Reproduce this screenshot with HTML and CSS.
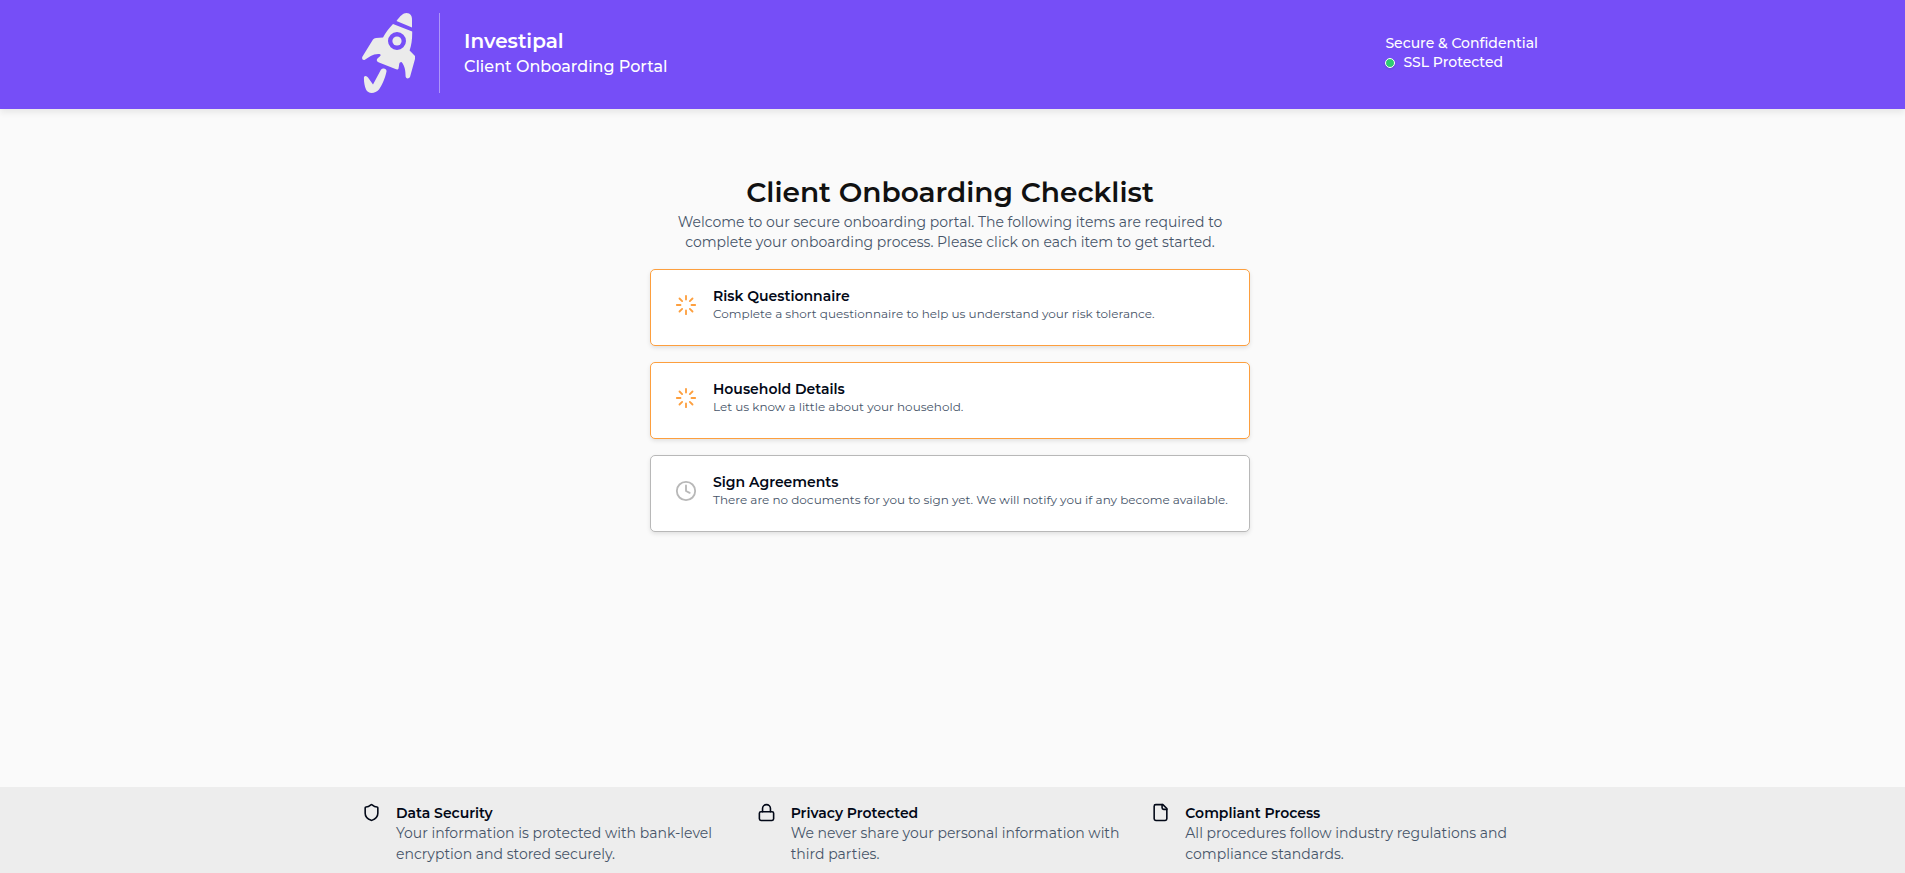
FILE: index.html
```html
<!DOCTYPE html>
<html lang="en">
<head>
<meta charset="utf-8">
<meta name="viewport" content="width=device-width, initial-scale=1">
<title>Client Onboarding Portal</title>
<link rel="stylesheet" href="styles.css">
</head>
<body>
<header class="header">
  <div class="container header-inner">
    <div class="brand">
      <svg class="logo" viewBox="0 0 54 80" aria-hidden="true">
        <path d="M34.500 8 C38 3 41 0 44.500 0 C48.500 0 50 3 50 6.500 L50 14.500 Z"/>
        <path fill-rule="evenodd" d="M31 11 L50.200 18.500 C50.300 26 49.500 32 47.600 37.500 L53 43 L53 46 L48 64 C47 66 44 66 43.600 63.500 C43.500 58 43 53 39.500 49 C36.500 49 37.500 52 36.500 55.500 C36 57 34.500 56.500 33.500 56 L17 49.500 C14.500 48.500 14 46.500 16 45 C19 43 19.500 41.500 17.500 41 C11 40.500 7 44 2.500 47 C0.500 47.500 -0.500 45.500 0.500 43.500 L11 26.500 Q12 25 14 25 L21 24.500 C23.500 20 27 15 31 11 Z M35 19 A9 9 0 1 0 35 37 A9 9 0 1 0 35 19 Z"/>
        <circle cx="35" cy="28" r="4.600"/>
        <path d="M2 64 C3 62 5 63 6 64.500 L11 71.500 L18.500 57.500 C20 54.500 25 55 24.500 58.500 C23 66 19.500 73 17 76.500 C13 81 6 81 4 76.500 C2.500 73 1.700 68 2 64 Z"/>
      </svg>
      <div class="brand-text">
        <div class="brand-name">Investipal</div>
        <div class="brand-sub">Client Onboarding Portal</div>
      </div>
    </div>
    <div class="secure">
      <div>Secure &amp; Confidential</div>
      <div class="ssl"><span class="dot"></span>SSL Protected</div>
    </div>
  </div>
</header>
<main class="main">
  <h1 class="title">Client Onboarding Checklist</h1>
  <p class="intro">Welcome to our secure onboarding portal. The following items are required to complete your onboarding process. Please click on each item to get started.</p>
  <div class="list">
    <button type="button" class="card">
      <svg class="card-icon" viewBox="0 0 24 24" aria-hidden="true"><path d="M12 2v4M12 18v4M2 12h4M18 12h4M4.900 4.900l2.900 2.900M16.200 16.200l2.900 2.900M4.900 19.100l2.900-2.900M16.200 7.800l2.900-2.900"/></svg>
      <span class="card-text"><span class="card-title">Risk Questionnaire</span><span class="card-desc">Complete a short questionnaire to help us understand your risk tolerance.</span></span>
    </button>
    <button type="button" class="card">
      <svg class="card-icon" viewBox="0 0 24 24" aria-hidden="true"><path d="M12 2v4M12 18v4M2 12h4M18 12h4M4.900 4.900l2.900 2.900M16.200 16.200l2.900 2.900M4.900 19.100l2.900-2.900M16.200 7.800l2.900-2.900"/></svg>
      <span class="card-text"><span class="card-title">Household Details</span><span class="card-desc">Let us know a little about your household.</span></span>
    </button>
    <button type="button" class="card card-waiting">
      <svg class="card-icon" viewBox="0 0 24 24" aria-hidden="true"><circle cx="12" cy="12" r="10"/><path d="M12 6v6l4 2"/></svg>
      <span class="card-text"><span class="card-title">Sign Agreements</span><span class="card-desc">There are no documents for you to sign yet. We will notify you if any become available.</span></span>
    </button>
  </div>
</main>
<footer class="footer">
  <div class="container features">
    <section class="feature">
      <svg class="feature-icon" viewBox="0 0 24 24" aria-hidden="true"><path d="M20 13c0 5-3.500 7.500-7.660 8.950a1 1 0 0 1-.67-.01C7.500 20.500 4 18 4 13V6a1 1 0 0 1 1-1c2 0 4.500-1.200 6.240-2.720a1.170 1.170 0 0 1 1.520 0C14.510 3.810 17 5 19 5a1 1 0 0 1 1 1z"/></svg>
      <div><h2 class="feature-title">Data Security</h2><p class="feature-desc">Your information is protected with bank-level encryption and stored securely.</p></div>
    </section>
    <section class="feature">
      <svg class="feature-icon" viewBox="0 0 24 24" aria-hidden="true"><rect x="3" y="11" width="18" height="11" rx="2"/><path d="M7 11V7a5 5 0 0 1 10 0v4"/></svg>
      <div><h2 class="feature-title">Privacy Protected</h2><p class="feature-desc">We never share your personal information with third parties.</p></div>
    </section>
    <section class="feature">
      <svg class="feature-icon" viewBox="0 0 24 24" aria-hidden="true"><path d="M15 2H6a2 2 0 0 0-2 2v16a2 2 0 0 0 2 2h12a2 2 0 0 0 2-2V7Z"/><path d="M14 2v4a2 2 0 0 0 2 2h4"/></svg>
      <div><h2 class="feature-title">Compliant Process</h2><p class="feature-desc">All procedures follow industry regulations and compliance standards.</p></div>
    </section>
  </div>
</footer>
</body>
</html>
```
FILE: styles.css
```css
* { box-sizing: border-box; }
body {
  margin: 0;
  padding-right: 5px;
  min-height: 100vh;
  display: flex;
  flex-direction: column;
  background: #fafafa;
  color: #020817;
  font-family: Montserrat, Inter, sans-serif;
  font-size: 14px;
}
h1, h2, p { margin: 0; }
.container { width: 100%; max-width: 1176px; margin: 0 auto; }
.header {
  margin-right: -5px;
  padding: 13px 5px 16px 0;
  background: #764ef7;
  color: #fff;
  box-shadow: 0 4px 6px rgba(0, 0, 0, 0.07);
}
.header-inner { display: flex; justify-content: space-between; align-items: center; }
.brand { display: flex; gap: 23px; }
.logo { width: 54px; height: 80px; fill: #ebebeb; }
.brand-text {
  display: flex;
  flex-direction: column;
  justify-content: center;
  padding-left: 24px;
  border-left: 1px solid #ad95fa;
}
.brand-name { font-size: 20px; font-weight: 600; line-height: 28px; }
.brand-sub { font-size: 16px; font-weight: 500; line-height: 24px; }
.secure { font-weight: 500; line-height: 19px; }
.ssl { display: flex; align-items: center; gap: 8px; }
.dot {
  width: 10px;
  height: 10px;
  border: 1px solid #fff;
  border-radius: 50%;
  background: #2ecc71;
  box-shadow: 0 1px 2px rgba(0, 0, 0, 0.15);
}
.main {
  flex: 1;
  width: 100%;
  max-width: 600px;
  margin: 0 auto;
  padding: 63px 0 32px;
}
.title { color: #111; font-size: 28px; line-height: 40px; font-weight: 600; text-align: center; }
.intro { padding: 0 16px; color: #475569; line-height: 20px; text-align: center; }
.list { display: grid; gap: 16px; margin-top: 17px; }
.card {
  display: flex;
  align-items: center;
  gap: 16px;
  min-height: 77px;
  padding: 16px 16px 22px 24px;
  border: 1px solid #fd9f3e;
  border-radius: 5px;
  background: #fff;
  color: #020817;
  box-shadow: 0 2px 4px rgba(0, 0, 0, 0.1);
  font-family: inherit;
  text-align: left;
  cursor: pointer;
}
.card-waiting { border-color: #b8b8b8; }
.card-icon {
  flex: none;
  width: 22px;
  height: 22px;
  fill: none;
  stroke: #fd9f3e;
  stroke-width: 2;
  stroke-linecap: round;
  stroke-linejoin: round;
}
.card-waiting .card-icon { stroke: #b8b8b8; }
.card-text { display: grid; }
.card-title { font-size: 14px; line-height: 18px; font-weight: 600; }
.card-desc { color: #475569; font-size: 12px; line-height: 18px; }
.footer { margin-right: -5px; padding: 16px 5px 8px 0; background: #ededed; }
.features { display: grid; grid-template-columns: repeat(3, 1fr); gap: 8px; }
.feature { display: flex; gap: 15px; padding-right: 16px; }
.feature-icon {
  flex: none;
  width: 19px;
  height: 19px;
  fill: none;
  stroke: #020817;
  stroke-width: 2;
  stroke-linecap: round;
  stroke-linejoin: round;
}
.feature-title { font-size: 14px; line-height: 20px; font-weight: 600; }
.feature-desc { color: #475569; line-height: 21px; }
```
